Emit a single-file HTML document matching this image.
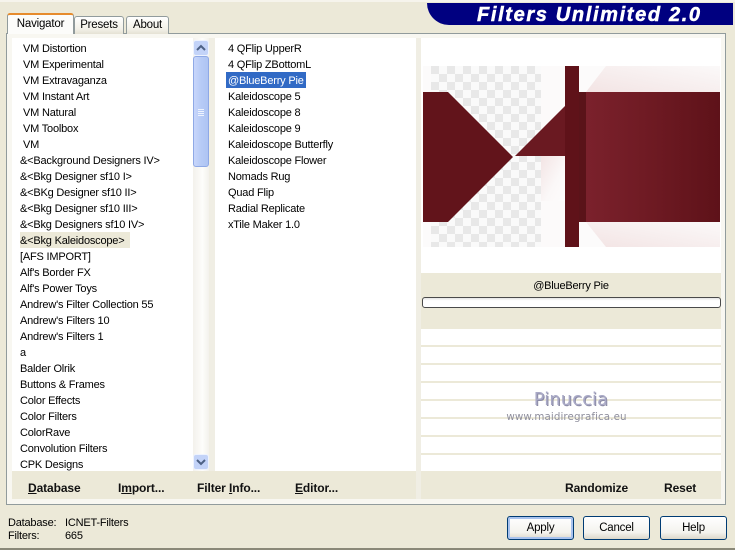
<!DOCTYPE html>
<html><head><meta charset="utf-8"><style>
html,body{margin:0;padding:0}
body{width:735px;height:550px;position:relative;overflow:hidden;background:#ece9d8;font:11px/16px "Liberation Sans",sans-serif;letter-spacing:-.2px;color:#000}
div{position:absolute;box-sizing:border-box}
.r div{white-space:nowrap;height:16px;left:0}
.b{font-weight:bold;font-size:12px;line-height:16px;white-space:nowrap;color:#111;letter-spacing:-.1px}
.u{text-decoration:underline}
.btn{top:516px;height:24px;border:1px solid #003c74;border-radius:3px;background:linear-gradient(#fff,#f4f3ee 70%,#dcd8ca);text-align:center;line-height:23px;font-size:11.5px}
.ln{left:421px;width:300px;height:2px;background:#ece9d8}
.tab{border:1px solid #919b9c;border-bottom:0;border-radius:3px 3px 0 0;background:linear-gradient(#fff,#f3f1e8 70%,#e4e1d4);text-align:center;font-size:11.5px;line-height:17px}
</style></head><body>
<div style="left:0;top:0;width:735px;height:2px;background:#f6f4ec"></div>
<div style="left:0;top:548px;width:735px;height:2px;background:#8a8878"></div>

<div style="left:427px;top:3px;width:306px;height:22px;background:#000080;border-radius:0 0 0 24px"></div>
<div style="left:477px;top:3px;height:22px;line-height:24px;color:#fff;font-weight:bold;font-style:italic;font-size:20px;letter-spacing:1.65px;white-space:nowrap;-webkit-text-stroke:.5px #fff">Filters Unlimited 2.0</div>

<div style="left:6px;top:33px;width:720px;height:472px;background:#f8f7f1;border:1px solid #919b9c"></div>
<div class="tab" style="left:74px;top:16px;width:50px;height:18px">Presets</div>
<div class="tab" style="left:126px;top:16px;width:43px;height:18px">About</div>
<div class="tab" style="left:7px;top:13px;width:67px;height:21px;background:#fcfcfa;border-top:2px solid #e68b2c;border-bottom:0;line-height:18px;z-index:2">Navigator</div>

<div style="left:12px;top:38px;width:181px;height:433px;background:#fff;overflow:hidden"></div>
<div style="left:20px;top:232px;width:110px;height:16px;background:#ece9d8"></div>
<div class="r" style="left:0;top:41px;width:193px;height:430px;overflow:hidden">
<div style="top:0;left:23px">VM Distortion</div>
<div style="top:16px;left:23px">VM Experimental</div>
<div style="top:32px;left:23px">VM Extravaganza</div>
<div style="top:48px;left:23px">VM Instant Art</div>
<div style="top:64px;left:23px">VM Natural</div>
<div style="top:80px;left:23px">VM Toolbox</div>
<div style="top:96px;left:23px">VM</div>
<div style="top:112px;left:20px">&amp;&lt;Background Designers IV&gt;</div>
<div style="top:128px;left:20px">&amp;&lt;Bkg Designer sf10 I&gt;</div>
<div style="top:144px;left:20px">&amp;&lt;BKg Designer sf10 II&gt;</div>
<div style="top:160px;left:20px">&amp;&lt;Bkg Designer sf10 III&gt;</div>
<div style="top:176px;left:20px">&amp;&lt;Bkg Designers sf10 IV&gt;</div>
<div style="top:192px;left:20px">&amp;&lt;Bkg Kaleidoscope&gt;</div>
<div style="top:208px;left:20px">[AFS IMPORT]</div>
<div style="top:224px;left:20px">Alf's Border FX</div>
<div style="top:240px;left:20px">Alf's Power Toys</div>
<div style="top:256px;left:20px">Andrew's Filter Collection 55</div>
<div style="top:272px;left:20px">Andrew's Filters 10</div>
<div style="top:288px;left:20px">Andrew's Filters 1</div>
<div style="top:304px;left:20px">a</div>
<div style="top:320px;left:20px">Balder Olrik</div>
<div style="top:336px;left:20px">Buttons &amp; Frames</div>
<div style="top:352px;left:20px">Color Effects</div>
<div style="top:368px;left:20px">Color Filters</div>
<div style="top:384px;left:20px">ColorRave</div>
<div style="top:400px;left:20px">Convolution Filters</div>
<div style="top:416px;left:20px">CPK Designs</div>
</div>

<div style="left:193px;top:38px;width:16px;height:433px;background:linear-gradient(90deg,#f3f1ec,#fdfdfb 60%,#f3f1ec)"></div>
<div style="left:193px;top:40px;width:16px;height:16px;background:#c3d3f8;border:1px solid #eef3fe;border-radius:3px"></div>
<div style="left:193px;top:56px;width:16px;height:111px;background:linear-gradient(90deg,#c8d6fb,#b7cbf6 50%,#aec4f3);border:1px solid #8fa9e6;border-radius:3px"></div>
<div style="left:198px;top:109px;width:6px;height:1px;background:#eef3fe;box-shadow:0 2px #eef3fe,0 4px #eef3fe,0 6px #eef3fe"></div>
<div style="left:193px;top:454px;width:16px;height:16px;background:#c3d3f8;border:1px solid #eef3fe;border-radius:3px"></div>
<svg style="position:absolute;left:193px;top:40px" width="16" height="16"><path d="M4 10L8 6L12 10" fill="none" stroke="#4d6185" stroke-width="2"/></svg>
<svg style="position:absolute;left:193px;top:454px" width="16" height="16"><path d="M4 6L8 10L12 6" fill="none" stroke="#4d6185" stroke-width="2"/></svg>

<div style="left:209px;top:38px;width:6px;height:433px;background:#f0eee4"></div>
<div style="left:215px;top:38px;width:201px;height:433px;background:#fff"></div>
<div style="left:226px;top:72px;width:80px;height:16px;background:#316ac5"></div>
<div class="r" style="left:228px;top:41px;width:188px;height:240px">
<div style="top:0">4 QFlip UpperR</div>
<div style="top:16px">4 QFlip ZBottomL</div>
<div style="top:32px;color:#fff">@BlueBerry Pie</div>
<div style="top:48px">Kaleidoscope 5</div>
<div style="top:64px">Kaleidoscope 8</div>
<div style="top:80px">Kaleidoscope 9</div>
<div style="top:96px">Kaleidoscope Butterfly</div>
<div style="top:112px">Kaleidoscope Flower</div>
<div style="top:128px">Nomads Rug</div>
<div style="top:144px">Quad Flip</div>
<div style="top:160px">Radial Replicate</div>
<div style="top:176px">xTile Maker 1.0</div>
</div>
<div style="left:416px;top:38px;width:5px;height:461px;background:#f0eee4"></div>

<div style="left:421px;top:38px;width:300px;height:433px;background:#fff"></div>
<svg style="position:absolute;left:421px;top:38px" width="300" height="235" viewBox="421 38 300 235">
<defs>
<pattern id="c" x="431" y="66" width="16" height="16" patternUnits="userSpaceOnUse"><rect x="0" y="0" width="16" height="16" fill="#fafafa"/><rect x="0" y="0" width="8" height="8" fill="#e8e8e8"/><rect x="8" y="8" width="8" height="8" fill="#e8e8e8"/></pattern>
<linearGradient id="g" x1="579" x2="720" y1="0" y2="0" gradientUnits="userSpaceOnUse"><stop offset="0" stop-color="#7c222d"/><stop offset=".45" stop-color="#701b24"/><stop offset="1" stop-color="#5e1219"/></linearGradient>
<linearGradient id="p" x1="0" x2="1" y1="1" y2="0"><stop offset="0" stop-color="#f3e4e4"/><stop offset="1" stop-color="#fbf9f9"/></linearGradient>
<linearGradient id="q" x1="0" x2="1" y1="0" y2="1"><stop offset="0" stop-color="#f3e4e4"/><stop offset=".6" stop-color="#fbf8f8"/><stop offset="1" stop-color="#fdfcfc"/></linearGradient>
</defs>
<rect x="423" y="66" width="142" height="181" fill="#fcfbfb"/>
<rect x="431" y="66" width="110" height="181" fill="url(#c)"/>
<path d="M423 92V80L431 66V92ZM423 222V236L431 247V222Z" fill="#fcfbfb"/>
<rect x="541" y="156" width="24" height="91" fill="#fcfafa"/>
<path d="M541 156H565V201H541Z" fill="url(#q)"/>
<rect x="541" y="66" width="24" height="60" fill="#fcfafa"/>
<rect x="579" y="66" width="141" height="181" fill="#fcfbfb"/>
<path d="M586 92L606 66H720V92Z" fill="url(#p)"/>
<path d="M586 222L606 247H720V222Z" fill="url(#p)"/>
<path d="M423 92H448L513 157L448 222H423Z" fill="#62141b"/>
<path d="M515 156L565 106H572V156Z" fill="#6a1921"/>
<rect x="565" y="156" width="7" height="45" fill="#7a2029"/>
<rect x="579" y="92" width="141" height="130" fill="url(#g)"/>
<rect x="572" y="92" width="14" height="130" fill="#5a1319"/>
<rect x="565" y="66" width="14" height="181" fill="#5f1219"/>
</svg>

<div style="left:421px;top:273px;width:300px;height:56px;background:#ece9d8"></div>
<div style="left:421px;top:278px;width:300px;text-align:center;">@BlueBerry Pie</div>
<div style="left:422px;top:297px;width:299px;height:11px;background:linear-gradient(#e4e4e4,#fff 30%);border:1px solid #4a4a4a;border-radius:3px"></div>
<div class="ln" style="top:345px"></div>
<div class="ln" style="top:363px"></div>
<div class="ln" style="top:381px"></div>
<div class="ln" style="top:399px"></div>
<div class="ln" style="top:417px"></div>
<div class="ln" style="top:435px"></div>
<div class="ln" style="top:453px"></div>

<div style="left:421px;top:388px;width:300px;text-align:center;font:normal 17.5px/24px 'DejaVu Sans',sans-serif;color:#a9a9c6;letter-spacing:.3px;text-shadow:1px 1px #8b8ba5">Pinuccia</div>
<div style="left:421px;top:409px;width:300px;padding-right:9px;text-align:center;font:10.3px/16px 'DejaVu Sans',sans-serif;color:#8f8f9d;letter-spacing:.1px">www.maidiregrafica.eu</div>

<div style="left:12px;top:471px;width:404px;height:28px;background:#ece9d8"></div>
<div style="left:421px;top:471px;width:300px;height:28px;background:#ece9d8"></div>
<div class="b" style="left:28px;top:480px"><span class="u">D</span>atabase</div>
<div class="b" style="left:118px;top:480px">I<span class="u">m</span>port...</div>
<div class="b" style="left:197px;top:480px">Filter <span class="u">I</span>nfo...</div>
<div class="b" style="left:295px;top:480px"><span class="u">E</span>ditor...</div>
<div class="b" style="left:565px;top:480px">Randomize</div>
<div class="b" style="left:664px;top:480px">Reset</div>

<div style="left:8px;top:515px;white-space:nowrap;font-size:11px">Database:</div>
<div style="left:8px;top:528px;white-space:nowrap;font-size:11px">Filters:</div>
<div style="left:65px;top:515px;white-space:nowrap;font-size:11px">ICNET-Filters</div>
<div style="left:65px;top:528px;white-space:nowrap;font-size:11px">665</div>

<div class="btn" style="left:507px;width:67px;box-shadow:inset 0 0 0 2px #a9c3ee">Apply</div>
<div class="btn" style="left:583px;width:67px">Cancel</div>
<div class="btn" style="left:660px;width:67px">Help</div>
</body></html>
